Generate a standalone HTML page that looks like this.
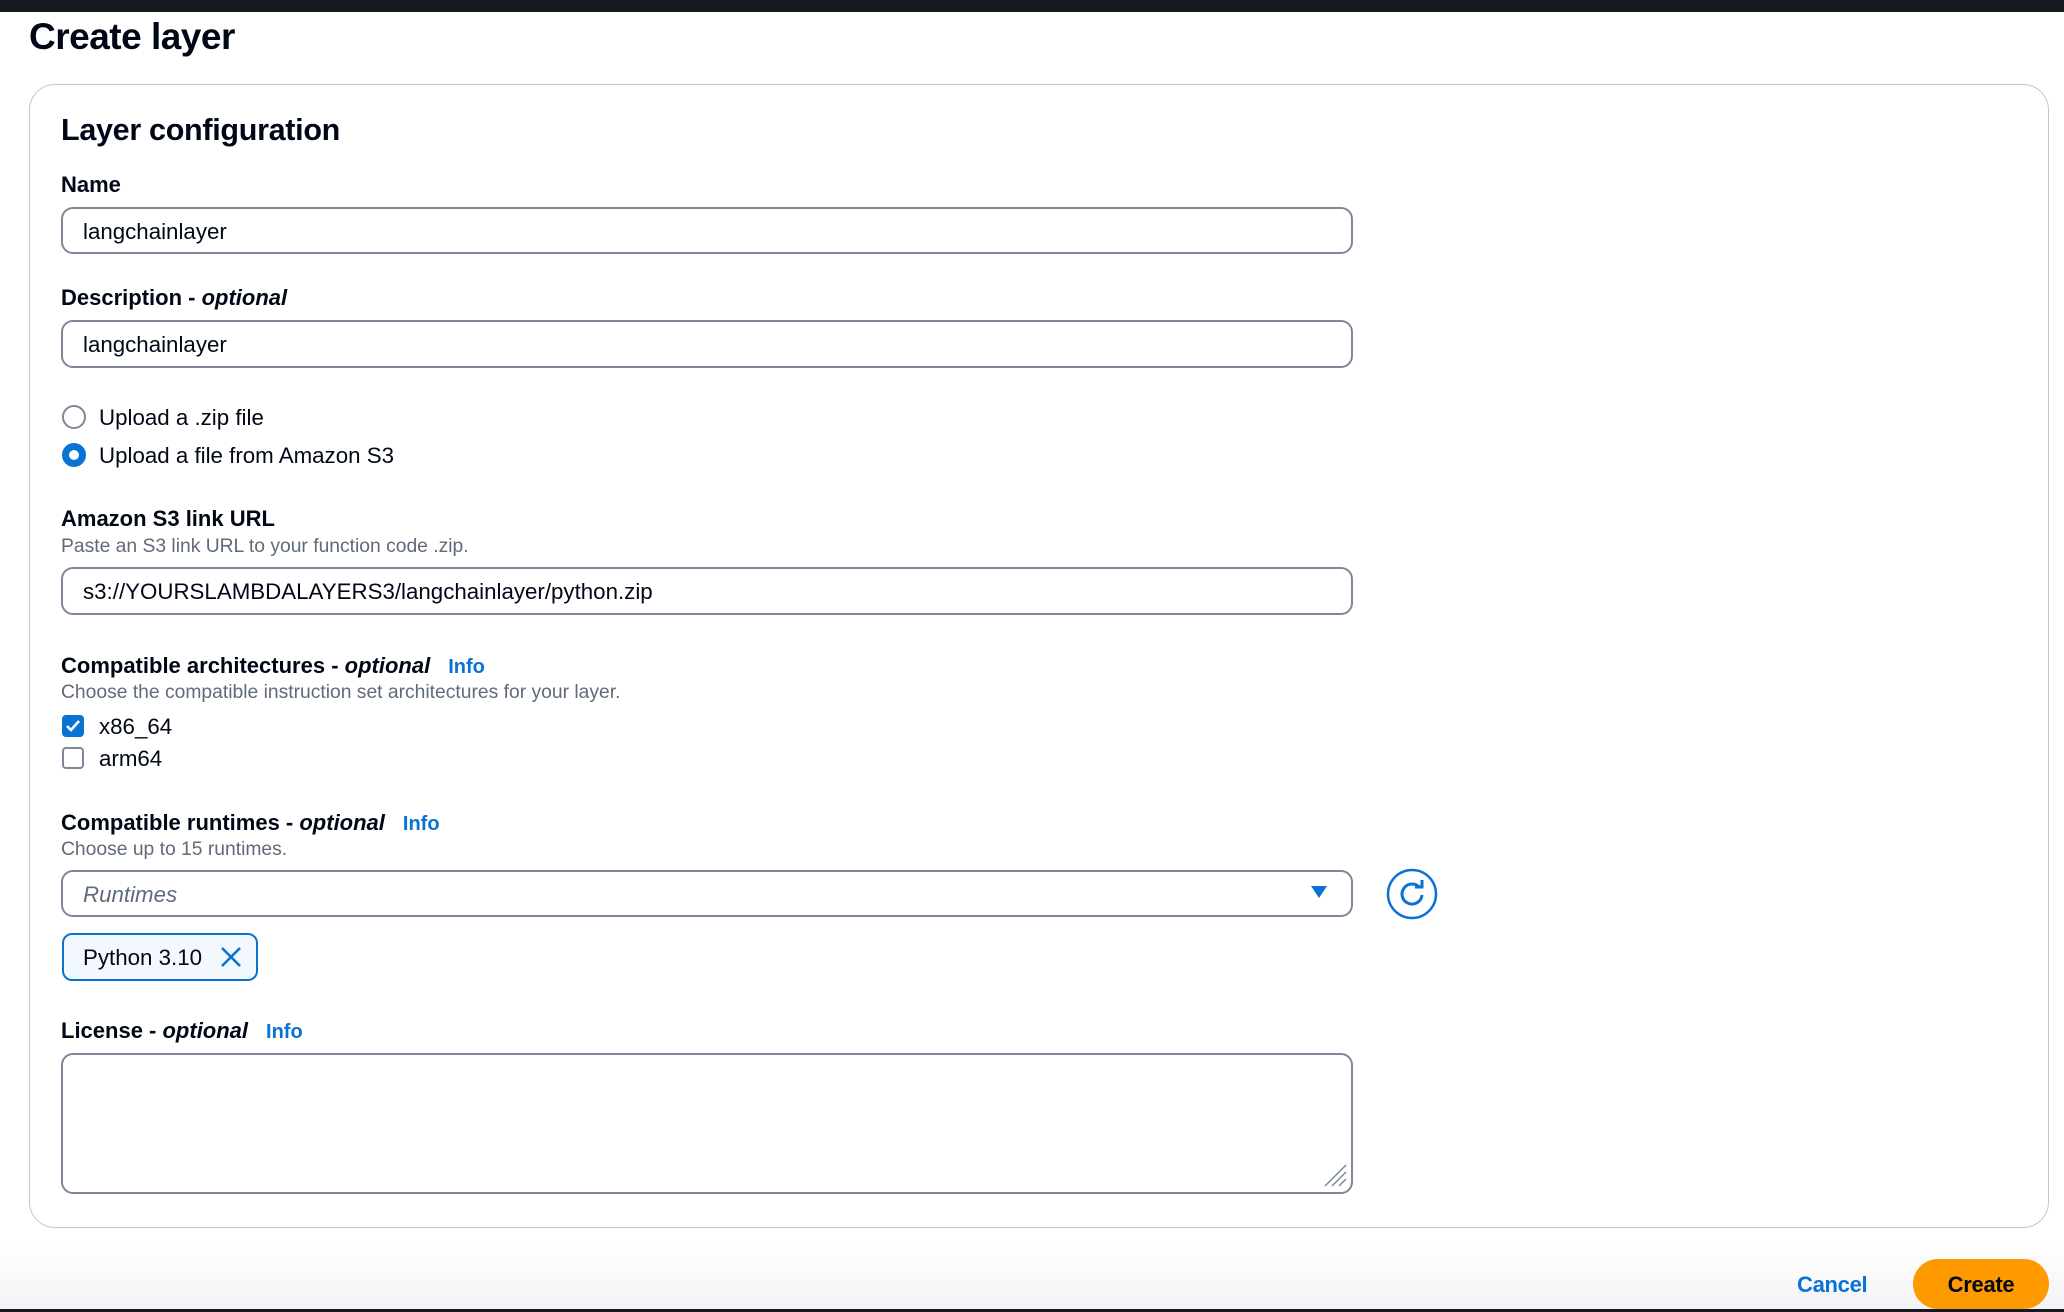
<!DOCTYPE html>
<html><head><meta charset="utf-8"><style>
*{margin:0;padding:0;box-sizing:border-box}
body{width:2064px;height:1312px;position:relative;overflow:hidden;background:#fff;font-family:"Liberation Sans",sans-serif;color:#000716}
.t{position:absolute;line-height:30px;white-space:nowrap}
.lbl{font-size:22px;font-weight:bold;letter-spacing:0}
.lbl i{font-weight:bold}
.info{color:#0972d3;font-size:20px;font-weight:bold;margin-left:18px;font-style:normal}
.hint{font-size:19.3px;color:#5f6b7a}
.inp{position:absolute;left:61px;width:1292px;border:2.5px solid #7d8998;border-radius:12px;background:#fff}
.val{font-size:22.3px}
</style></head><body>
<div style="position:absolute;left:0;top:0;width:2064px;height:12px;background:#16191f"></div>
<div class="t" style="left:29px;top:19px;font-size:37px;font-weight:bold;line-height:36px;letter-spacing:-0.5px">Create layer</div>

<div style="position:absolute;left:29px;top:84px;width:2020px;height:1144px;border:1.5px solid #c6c6cd;border-radius:26px;background:#fff"></div>

<div class="t" style="left:61px;top:113px;font-size:30.5px;font-weight:bold;line-height:34px;letter-spacing:-0.3px">Layer configuration</div>

<div class="t lbl" style="left:61px;top:170px">Name</div>
<div class="inp" style="top:207px;height:47px"></div>
<div class="t val" style="left:83px;top:217px">langchainlayer</div>

<div class="t lbl" style="left:61px;top:283px">Description - <i>optional</i></div>
<div class="inp" style="top:320px;height:48px"></div>
<div class="t val" style="left:83px;top:330px">langchainlayer</div>

<div style="position:absolute;left:62px;top:405px;width:24px;height:24px;border:2.5px solid #7d8998;border-radius:50%"></div>
<div class="t val" style="left:99px;top:403px">Upload a .zip file</div>
<div style="position:absolute;left:62px;top:443px;width:24px;height:24px;border:7px solid #0972d3;border-radius:50%;background:#fff"></div>
<div class="t val" style="left:99px;top:441px">Upload a file from Amazon S3</div>

<div class="t lbl" style="left:61px;top:504px">Amazon S3 link URL</div>
<div class="t hint" style="left:61px;top:532px">Paste an S3 link URL to your function code .zip.</div>
<div class="inp" style="top:567px;height:48px"></div>
<div class="t val" style="left:83px;top:577px">s3://YOURSLAMBDALAYERS3/langchainlayer/python.zip</div>

<div class="t lbl" style="left:61px;top:651px">Compatible architectures - <i>optional</i><span class="info">Info</span></div>
<div class="t hint" style="left:61px;top:678px">Choose the compatible instruction set architectures for your layer.</div>
<div style="position:absolute;left:62px;top:715px;width:22px;height:22px;background:#0972d3;border-radius:4px"><svg width="22" height="22" viewBox="0 0 22 22"><path d="M5 11l4 4 8-9" stroke="#fff" stroke-width="2.6" fill="none"/></svg></div>
<div class="t val" style="left:99px;top:712px">x86_64</div>
<div style="position:absolute;left:62px;top:747px;width:22px;height:22px;border:2.5px solid #7d8998;border-radius:4px"></div>
<div class="t val" style="left:99px;top:744px">arm64</div>

<div class="t lbl" style="left:61px;top:808px">Compatible runtimes - <i>optional</i><span class="info">Info</span></div>
<div class="t hint" style="left:61px;top:835px">Choose up to 15 runtimes.</div>
<div class="inp" style="top:870px;height:47px"></div>
<div class="t val" style="left:83px;top:880px;font-style:italic;color:#5f6b7a">Runtimes</div>
<svg style="position:absolute;left:1310px;top:885px" width="18" height="14" viewBox="0 0 18 14"><path d="M1 1h16L9 13z" fill="#0972d3"/></svg>
<svg style="position:absolute;left:1386px;top:868px" width="52" height="52" viewBox="0 0 52 52"><circle cx="26" cy="26" r="24" fill="none" stroke="#0972d3" stroke-width="2.5"/><path d="M34 20A10 10 0 1 0 36 27" fill="none" stroke="#0972d3" stroke-width="3"/><path d="M29 19h7v-7" fill="none" stroke="#0972d3" stroke-width="3"/></svg>

<div style="position:absolute;left:62px;top:933px;width:196px;height:48px;border:2.5px solid #0972d3;border-radius:10px;background:#f2f8fd"></div>
<div class="t val" style="left:83px;top:943px">Python 3.10</div>
<svg style="position:absolute;left:220px;top:946px" width="22" height="22" viewBox="0 0 22 22"><path d="M2 2l18 18M20 2L2 20" stroke="#0972d3" stroke-width="2.6"/></svg>

<div class="t lbl" style="left:61px;top:1016px">License - <i>optional</i><span class="info">Info</span></div>
<div class="inp" style="top:1053px;height:141px"></div>
<svg style="position:absolute;left:1323px;top:1163px" width="25" height="25" viewBox="0 0 25 25"><path d="M2 23L23 2M9 23L23 9M16 23L23 16" stroke="#7d8998" stroke-width="1.5"/></svg>

<div style="position:absolute;left:0;top:1240px;width:2064px;height:69px;background:linear-gradient(#fff,#f4f4f6)"></div>
<div class="t" style="left:1797px;top:1270px;font-size:22px;font-weight:bold;color:#0972d3;letter-spacing:-0.3px">Cancel</div>
<div style="position:absolute;left:1913px;top:1259px;width:136px;height:50px;border-radius:25px;background:#ff9900"></div>
<div class="t" style="left:1913px;width:136px;text-align:center;top:1270px;font-size:22px;font-weight:bold;letter-spacing:-0.3px">Create</div>
<div style="position:absolute;left:0;top:1309px;width:2064px;height:3px;background:#16191f"></div>
</body></html>
